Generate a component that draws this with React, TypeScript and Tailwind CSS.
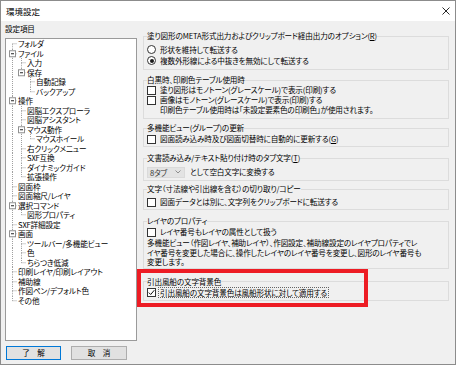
import React from 'react'

type Item = [string, number, boolean]

// ツリー項目: [表示名, 階層, 展開ボタン]
const items: Item[] = [
  ['フォルダ', 0, false],
  ['ファイル', 0, true],
  ['入力', 1, false],
  ['保存', 1, true],
  ['自動記録', 2, false],
  ['バックアップ', 2, false],
  ['操作', 0, true],
  ['図脳エクスプローラ', 1, false],
  ['図脳アシスタント', 1, false],
  ['マウス動作', 1, true],
  ['マウスホイール', 2, false],
  ['右クリックメニュー', 1, false],
  ['SXF互換', 1, false],
  ['ダイナミックガイド', 1, false],
  ['拡張操作', 1, false],
  ['図面枠', 0, false],
  ['図面縮尺/レイヤ', 0, false],
  ['選択コマンド', 0, true],
  ['図形プロパティ', 1, false],
  ['SXF詳細設定', 0, false],
  ['画面', 0, true],
  ['ツールバー/多機能ビュー', 1, false],
  ['色', 1, false],
  ['ちらつき低減', 1, false],
  ['印刷レイヤ/印刷レイアウト', 0, false],
  ['補助線', 0, false],
  ['作図ペン/デフォルト色', 0, false],
  ['その他', 0, false],
]

const hasNext = (k: number) => {
  const lvl = items[k][1]
  for (let j = k + 1; j < items.length; j++) {
    if (items[j][1] < lvl) return false
    if (items[j][1] === lvl) return true
  }
  return false
}

const ancestorAt = (k: number, lvl: number) => {
  for (let j = k - 1; j >= 0; j--) {
    if (items[j][1] === lvl) return j
  }
  return -1
}

const ROW_H = 9.5
const COL = 9

function Connector({ k }: { k: number }) {
  const lvl = items[k][1]
  const w = COL * (lvl + 1)
  const mid = ROW_H / 2
  const dash = { stroke: '#a0a0a0', strokeWidth: 1, strokeDasharray: '1 1' }
  const lines: React.ReactNode[] = []
  for (let i = 0; i < lvl; i++) {
    const a = ancestorAt(k, i)
    if (a >= 0 && hasNext(a)) {
      const x = COL * i + 4.5
      lines.push(<line key={'a' + i} x1={x} y1={0} x2={x} y2={ROW_H} {...dash} />)
    }
  }
  const x = COL * lvl + 4.5
  if (k !== 0) lines.push(<line key="t" x1={x} y1={0} x2={x} y2={mid} {...dash} />)
  if (hasNext(k)) lines.push(<line key="b" x1={x} y1={mid} x2={x} y2={ROW_H} {...dash} />)
  lines.push(<line key="h" x1={x} y1={mid} x2={w} y2={mid} {...dash} />)
  return (
    <svg width={w} height={ROW_H} viewBox={`0 0 ${w} ${ROW_H}`} className="shrink-0">
      {lines}
      {items[k][2] && (
        <g>
          <rect x={x - 3} y={mid - 3} width={6} height={6} fill="#fff" stroke="#919191" strokeWidth={1} />
          <line x1={x - 1.5} y1={mid} x2={x + 1.5} y2={mid} stroke="#222" strokeWidth={1} />
        </g>
      )}
    </svg>
  )
}

function Radio({ on }: { on?: boolean }) {
  return (
    <span className="w-[9px] h-[9px] rounded-full border border-[#333] bg-white flex items-center justify-center shrink-0">
      {on && <span className="w-[4px] h-[4px] rounded-full bg-[#1a1a1a]" />}
    </span>
  )
}

function Check({ on }: { on?: boolean }) {
  return (
    <span className="w-[9px] h-[9px] border border-[#333] bg-white flex items-center justify-center shrink-0">
      {on && (
        <svg width="7" height="7" viewBox="0 0 7 7">
          <path d="M0.8 3.6 L2.7 5.5 L6.3 1.2" fill="none" stroke="#111" strokeWidth="1" />
        </svg>
      )}
    </span>
  )
}

function GroupBox({
  label,
  className,
  children,
}: {
  label: React.ReactNode
  className?: string
  children: React.ReactNode
}) {
  return (
    <fieldset className={`border border-[#dcdcdc] px-[3px] ${className ?? ''}`}>
      <legend className="leading-[10px] whitespace-nowrap">{label}</legend>
      {children}
    </fieldset>
  )
}

const App: React.FC = () => {
  return (
    <div className="w-[456px] h-[365px] border border-[#8c8c8c] bg-[#f0f0f0] text-[7.6px] tracking-[-0.15px] text-black font-['Noto_Sans_CJK_JP',sans-serif] [font-feature-settings:'palt'] flex flex-col overflow-hidden">
      {/* タイトルバー */}
      <div className="h-[20px] bg-white flex items-center justify-between pl-[5px] pr-[5px] shrink-0">
        <span className="text-[8.5px] tracking-normal leading-[10px]">環境設定</span>
        <svg width="8" height="8" viewBox="0 0 8 8">
          <path d="M0.5 0.5 L7.5 7.5 M7.5 0.5 L0.5 7.5" stroke="#111" strokeWidth="0.9" />
        </svg>
      </div>

      <div className="flex flex-1">
        {/* 左側: 設定項目 */}
        <div className="ml-[4px] w-[132px] flex flex-col">
          <div className="mt-[3px] leading-[10px]">設定項目</div>
          <div className="mt-[4px] h-[303px] border border-[#9a9a9a] bg-white pl-[2px]">
            {items.map(([name], k) => (
              <div key={k} className="flex items-center h-[9.5px] leading-[9.5px] whitespace-nowrap">
                <Connector k={k} />
                <span className="ml-[1px]">{name}</span>
              </div>
            ))}
          </div>
          <div className="mt-[5px] flex gap-[10px] pl-[1px]">
            <button className="w-[55px] h-[14px] border border-[#0078d7] bg-[#e1e1e1] leading-[12px] text-center">
              了　解
            </button>
            <button className="w-[56px] h-[14px] border border-[#adadad] bg-[#e1e1e1] leading-[12px] text-center">
              取　消
            </button>
          </div>
        </div>

        {/* 右側: オプション */}
        <div className="ml-[6px] w-[306px] pt-[10px] flex flex-col">
          <GroupBox
            label={
              <>
                塗り図形のMETA形式出力およびクリップボード経由出力のオプション(<span className="underline">R</span>)
              </>
            }
            className="pb-[3px]"
          >
            <div className="mt-[3px] h-[11px] flex items-center gap-[4px]">
              <Radio />
              <span>形状を維持して転送する</span>
            </div>
            <div className="h-[11px] flex items-center gap-[4px]">
              <Radio on />
              <span>複数外形線による中抜きを無効にして転送する</span>
            </div>
          </GroupBox>

          <GroupBox label="白黒時、印刷色テーブル使用時" className="mt-[5px] pb-[3px]">
            <div className="h-[10px] flex items-center gap-[4px]">
              <Check />
              <span>塗り図形はモノトーン(グレースケール)で表示(印刷)する</span>
            </div>
            <div className="h-[10px] flex items-center gap-[4px]">
              <Check />
              <span>画像はモノトーン(グレースケール)で表示(印刷)する</span>
            </div>
            <div className="h-[10px] leading-[10px] pl-[13px] whitespace-nowrap">
              印刷色テーブル使用時は「未設定要素色の印刷色」が使用されます。
            </div>
          </GroupBox>

          <GroupBox label="多機能ビュー(グループ)の更新" className="mt-[4px] pb-[2px]">
            <div className="mt-[1px] h-[10px] flex items-center gap-[4px]">
              <Check />
              <span>
                図面読み込み時及び図面切替時に自動的に更新する(<span className="underline">G</span>)
              </span>
            </div>
          </GroupBox>

          <GroupBox
            label={
              <>
                文書読み込み/テキスト貼り付け時のタブ文字(<span className="underline">T</span>)
              </>
            }
            className="mt-[6px] pb-[2px]"
          >
            <div className="mt-[3px] h-[12px] flex items-center">
              <div className="w-[38px] h-[11px] bg-[#e3e3e3] border border-[#dadada] flex items-center justify-between pl-[2px] pr-[3px] text-[#333]">
                <span className="leading-[9px]">8タブ</span>
                <svg width="6" height="4" viewBox="0 0 6 4">
                  <path d="M0.5 0.5 L3 3 L5.5 0.5" fill="none" stroke="#777" strokeWidth="0.8" />
                </svg>
              </div>
              <span className="ml-[5px]">として空白文字に変換する</span>
            </div>
          </GroupBox>

          <GroupBox label="文字（寸法線や引出線を含む）の切り取り/コピー" className="mt-[3px] pb-[2px]">
            <div className="mt-[3px] h-[10px] flex items-center gap-[4px]">
              <Check />
              <span>図面データとは別に、文字列をクリップボードに転送する</span>
            </div>
          </GroupBox>

          <GroupBox label="レイヤのプロパティ" className="mt-[6px] pb-[1px]">
            <div className="mt-[1px] h-[10px] flex items-center gap-[4px]">
              <Check />
              <span>レイヤ番号もレイヤの属性として扱う</span>
            </div>
            <div className="mt-[1px] leading-[9.5px] whitespace-nowrap">
              <div>多機能ビュー（作図レイヤ、補助レイヤ）、作図設定、補助線設定のレイヤプロパティでレ</div>
              <div>イヤ番号を変更した場合に、操作したレイヤのレイヤ番号を変更し、図形のレイヤ番号も</div>
              <div>変更します。</div>
            </div>
          </GroupBox>

          <div className="relative mt-[8px]">
            <GroupBox label="引出風船の文字背景色" className="pb-[2px]">
              <div className="h-[11px] flex items-center gap-[2px]">
                <Check on />
                <span className="border border-dotted border-[#666] leading-[9px] px-[1px]">
                  引出風船の文字背景色は風船形状に対して適用する
                </span>
              </div>
            </GroupBox>
            {/* 注記用の赤枠 */}
            <div className="absolute -top-[8px] -left-[6px] w-[231px] h-[38px] border-[4px] border-[#ed1c24] pointer-events-none" />
          </div>
        </div>
      </div>
    </div>
  )
}

export default App
